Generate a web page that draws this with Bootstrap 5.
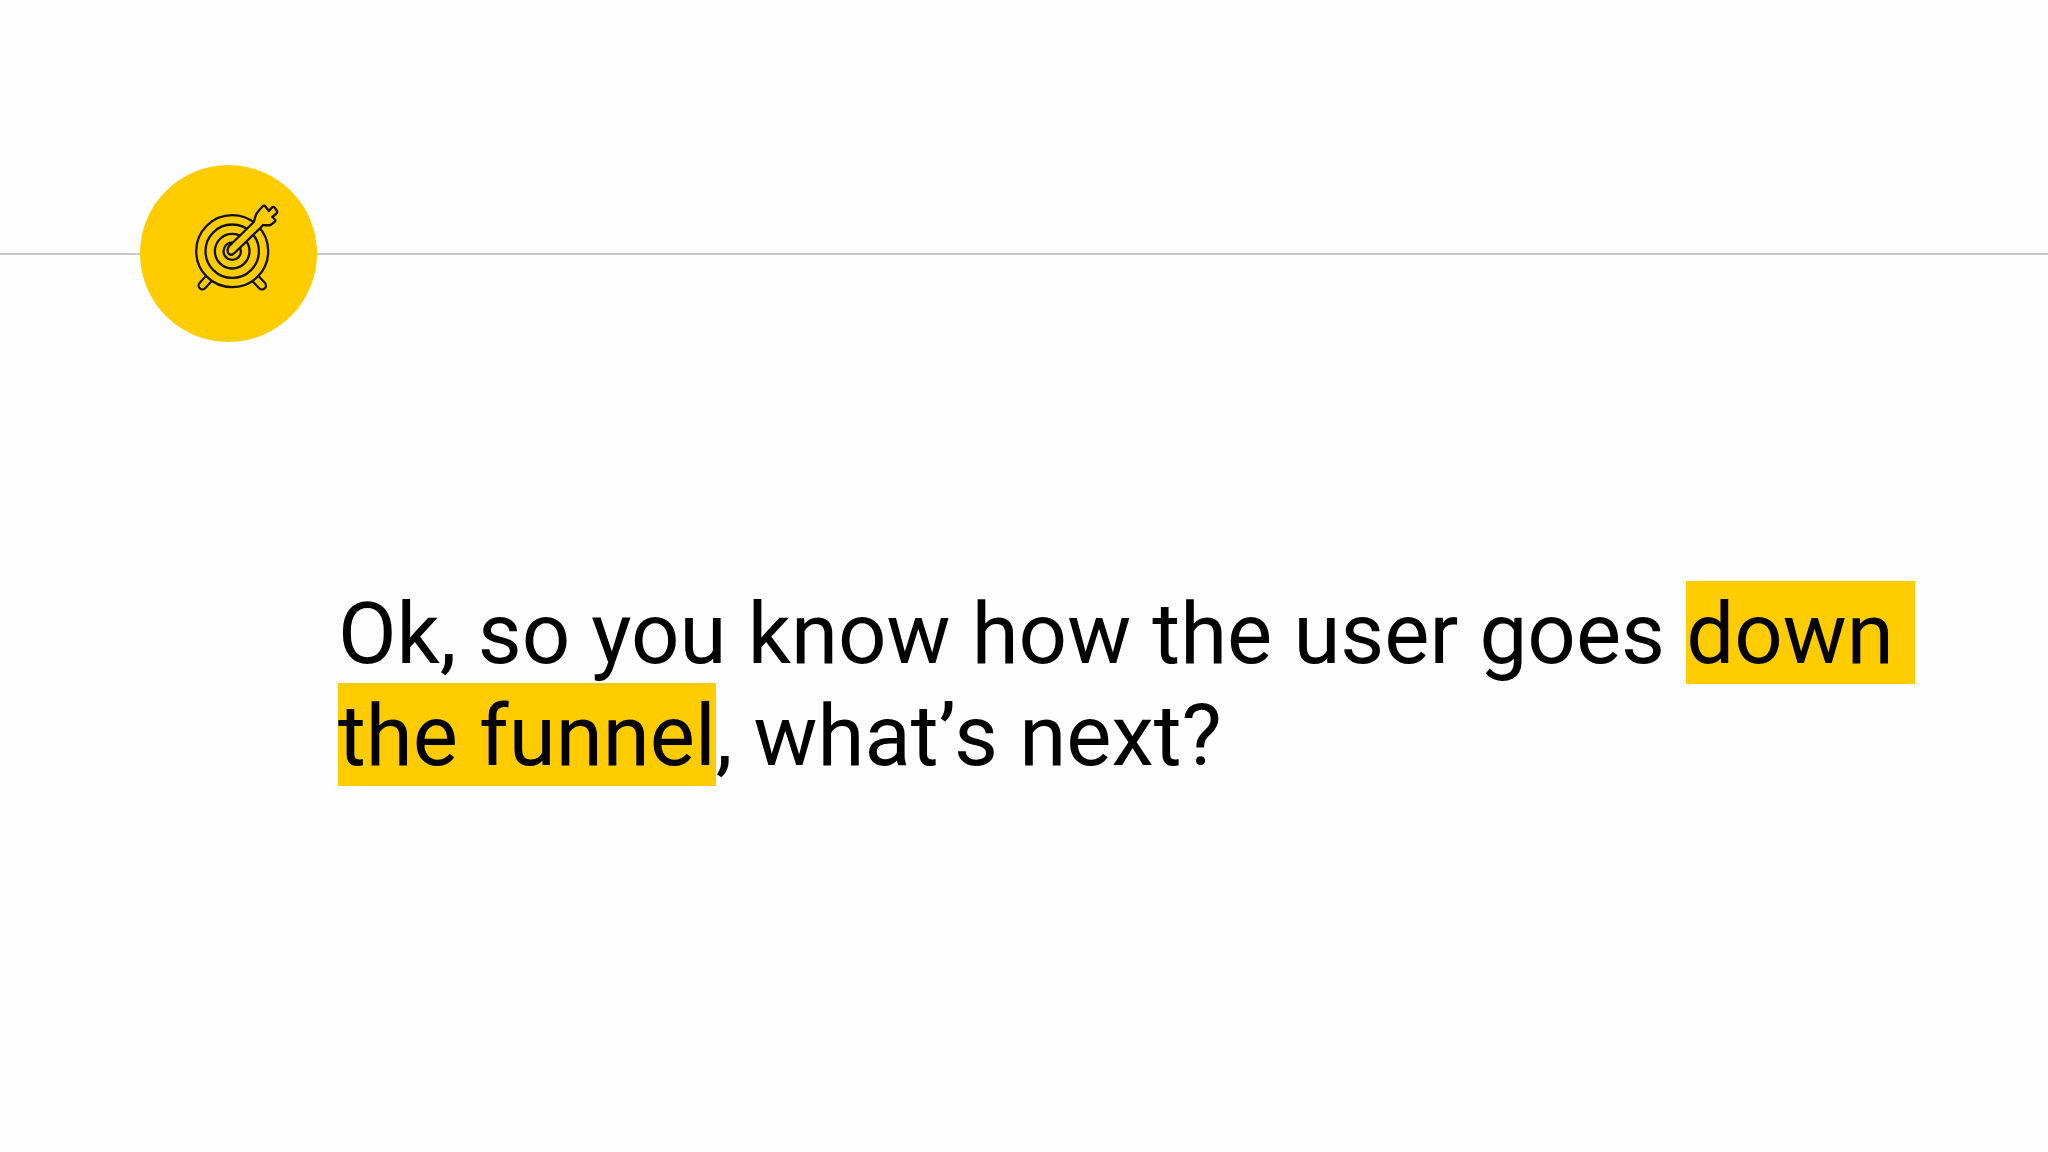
<!DOCTYPE html>
<html lang="en">
<head>
<meta charset="utf-8">
<title>Down the funnel</title>
<link href="https://cdn.jsdelivr.net/npm/bootstrap@5.3.0/dist/css/bootstrap.min.css" rel="stylesheet">
<style>
html, body { height: 100%; }
body { background: #fefefe; color: #000; font-family: Roboto, "Liberation Sans", sans-serif; overflow: hidden; }
.slide-head { padding-top: 165px; }
.rule-start { width: 140px; }
.rule-line { height: 2px; background: #c9c9c9; }
.badge-disc { width: 177px; height: 177px; background: #ffcc00; }
.slide-quote { margin: 241px 0 0 338px; font-size: 85.2px; line-height: 102px; font-weight: 400; white-space: nowrap; }
.hl { background: #ffcc00; padding: 3px 0 0; }
.apos-gap { letter-spacing: -1.7px; }
.target-icon { width: 100px; height: 100px; }
.target-icon * { stroke: #111; stroke-width: 2.3; fill: none; stroke-linejoin: round; stroke-linecap: round; }
.target-icon .solid { fill: #ffcc00; }
.target-icon .leg-out { stroke-width: 10; }
.target-icon .leg-in { stroke: #ffcc00; stroke-width: 5.6; }
</style>
</head>
<body>
<div class="slide-head d-flex align-items-center">
  <div class="rule-line rule-start flex-shrink-0"></div>
  <div class="badge-disc rounded-circle flex-shrink-0 d-flex align-items-center justify-content-center">
    <svg class="target-icon" viewBox="0 0 100 100" aria-hidden="true">
      <line class="leg-out" x1="32" y1="72" x2="23.5" y2="81.5"/>
      <line class="leg-in" x1="32" y1="72" x2="23.5" y2="81.5"/>
      <line class="leg-out" x1="74" y1="72" x2="83" y2="81.5"/>
      <line class="leg-in" x1="74" y1="72" x2="83" y2="81.5"/>
      <circle class="solid" cx="53.2" cy="47.2" r="36"/>
      <circle cx="53.2" cy="47.2" r="26.7"/>
      <circle cx="53.2" cy="47.2" r="17.3"/>
      <circle cx="53.2" cy="47.2" r="8.7"/>
      <path class="solid" d="M49.8 42.5 L74.8 18 L77 10.5 Q80 6 84 2 Q85.5 1 86.5 2.5 L89.8 7 L93 3.5 Q94.5 2.3 95.8 3.8 L98 7 Q98.6 8.5 97.5 9.5 L93.2 13 L96 15.5 Q97 17 95.5 18 L91.5 21 Q86 21.5 84 21 L80.8 24.5 L55 49.5 Q51.5 52 49.5 49.5 Q47.5 46 49.8 42.5 Z"/>
    </svg>
  </div>
  <div class="rule-line flex-grow-1"></div>
</div>
<p class="slide-quote">Ok, so you know how the user goes <span class="hl">down&nbsp;</span><br><span class="hl">the funnel</span>, what<span class="apos-gap">’</span>s next?</p>
<script src="https://cdn.jsdelivr.net/npm/bootstrap@5.3.0/dist/js/bootstrap.bundle.min.js"></script>
</body>
</html>
